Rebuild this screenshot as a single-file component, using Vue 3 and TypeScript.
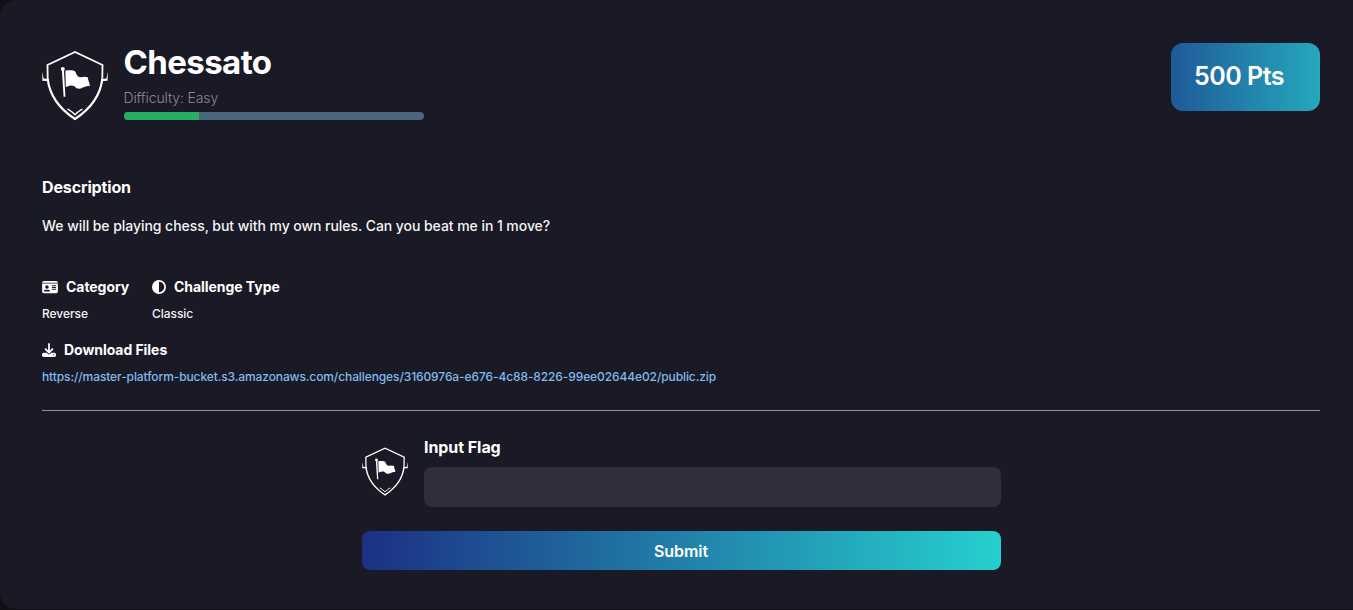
<script setup lang="ts">
import { ref } from 'vue'

interface Challenge {
  title: string
  difficulty: string
  progress: number
  points: number
  description: string
  category: string
  type: string
  file: string
}

const challenge: Challenge = {
  title: 'Chessato',
  difficulty: 'Easy',
  progress: 25,
  points: 500,
  description: 'We will be playing chess, but with my own rules. Can you beat me in 1 move?',
  category: 'Reverse',
  type: 'Classic',
  file: 'https://master-platform-bucket.s3.amazonaws.com/challenges/3160976a-e676-4c88-8226-99ee02644e02/public.zip',
}

const flag = ref('')
</script>

<template>
  <main class="card">
    <svg class="defs" width="0" height="0" aria-hidden="true">
      <symbol id="shield" viewBox="0 0 66 71">
        <g fill="none" stroke="#fff">
          <path stroke-width="1.800" d="M5.700 30 L5.500 15 L33 2 L60.500 15 L60.300 30" />
          <path stroke-width="2.100" d="M5.700 29 C7.500 44 17 58.500 33 69 C49 58.500 58.500 44 60.300 29" />
          <path stroke-width="1.400" d="M25.500 59.300 C28 59.800 28.500 61.300 30.300 62.200 L33 64.700 L35.700 62.200 C37.500 61.300 38 59.800 40.500 59.300" />
        </g>
        <g fill="#fff">
          <path d="M.2 21.500 L1.600 28.600 L6 29 L6.500 33 L5 30.900 L.4 30.700 Z" />
          <path d="M65.800 21.500 L64.400 28.600 L60 29 L59.500 33 L61 30.900 L65.600 30.700 Z" />
          <circle cx="20.800" cy="18.900" r="2" />
          <path d="M19.800 19 H21.900 L23.400 46.700 H21.600 Z" />
          <path d="M23.400 20.400 C27 20.600 31 19.500 33.200 21.600 C34.600 24 34.600 26.300 37 27 C40 27.800 42.800 25.600 46 27.600 C45.800 31 48.400 33.600 47.700 36.300 C43 35.300 41 38.900 37 38.800 C33 38.600 33.400 35 28.500 35.600 L23.800 37 Z" />
        </g>
      </symbol>
    </svg>

    <header class="head">
      <svg class="shield"><use href="#shield" /></svg>
      <div class="heading">
        <h1>{{ challenge.title }}</h1>
        <p class="difficulty">Difficulty: {{ challenge.difficulty }}</p>
        <div class="track"><div class="fill" :style="{ width: challenge.progress + '%' }"></div></div>
      </div>
      <div class="points">{{ challenge.points }} Pts</div>
    </header>

    <h2 class="desc-title">Description</h2>
    <p class="desc">{{ challenge.description }}</p>

    <div class="meta">
      <section class="category">
        <h3>
          <svg width="16" height="14" viewBox="0 0 576 512" fill="#fff"><path d="M0 96l576 0c0-35.300-28.700-64-64-64L64 32C28.700 32 0 60.700 0 96zm0 32L0 416c0 35.300 28.700 64 64 64l448 0c35.300 0 64-28.700 64-64l0-288L0 128zM64 405.300c0-29.500 23.900-53.300 53.300-53.300l117.300 0c29.500 0 53.300 23.900 53.300 53.300c0 5.900-4.800 10.700-10.700 10.700L74.700 416c-5.900 0-10.700-4.800-10.700-10.700zM176 192a64 64 0 1 1 0 128 64 64 0 1 1 0-128zm176 16c0-8.800 7.200-16 16-16l128 0c8.800 0 16 7.200 16 16s-7.200 16-16 16l-128 0c-8.800 0-16-7.200-16-16zm0 64c0-8.800 7.200-16 16-16l128 0c8.800 0 16 7.200 16 16s-7.200 16-16 16l-128 0c-8.800 0-16-7.200-16-16zm0 64c0-8.800 7.200-16 16-16l128 0c8.800 0 16 7.200 16 16s-7.200 16-16 16l-128 0c-8.800 0-16-7.200-16-16z" /></svg>
          <span>Category</span>
        </h3>
        <p>{{ challenge.category }}</p>
      </section>
      <section>
        <h3>
          <svg width="14" height="14" viewBox="0 0 512 512" fill="#fff"><path d="M448 256c0-106-86-192-192-192l0 384c106 0 192-86 192-192zM0 256a256 256 0 1 1 512 0A256 256 0 1 1 0 256z" /></svg>
          <span>Challenge Type</span>
        </h3>
        <p>{{ challenge.type }}</p>
      </section>
    </div>

    <section class="files">
      <h3>
        <svg width="14" height="14" viewBox="0 0 512 512" fill="#fff"><path d="M288 32c0-17.700-14.300-32-32-32s-32 14.300-32 32l0 242.700-73.400-73.400c-12.500-12.500-32.800-12.500-45.300 0s-12.500 32.800 0 45.300l128 128c12.500 12.500 32.800 12.500 45.300 0l128-128c12.500-12.500 12.500-32.800 0-45.300s-32.800-12.500-45.300 0L288 274.700 288 32zM64 352c-35.300 0-64 28.700-64 64l0 32c0 35.300 28.700 64 64 64l384 0c35.300 0 64-28.700 64-64l0-32c0-35.300-28.700-64-64-64l-101.500 0-45.300 45.300c-25 25-65.500 25-90.500 0L165.500 352 64 352zm368 56a24 24 0 1 1 0 48 24 24 0 1 1 0-48z" /></svg>
        <span>Download Files</span>
      </h3>
      <a>{{ challenge.file }}</a>
    </section>

    <form class="form" @submit.prevent>
      <div class="row">
        <svg class="shield small"><use href="#shield" /></svg>
        <div class="field">
          <label for="flag">Input Flag</label>
          <input id="flag" v-model="flag" type="text" autocomplete="off" />
        </div>
      </div>
      <button type="submit">Submit</button>
    </form>
  </main>
</template>

<style>
body {
  margin: 0;
  background: #111114;
  overflow: hidden;
}
</style>

<style scoped>
.card {
  box-sizing: border-box;
  width: 1370px;
  height: 609px;
  padding: 43px 50px 0 42px;
  background: #1a1926;
  border-radius: 16px;
  font-family: Inter, "Liberation Sans", sans-serif;
  color: #fff;
}
.defs { display: block; }
h1, h2, h3, p { margin: 0; }
.head { display: flex; height: 80px; }
.shield { flex: none; width: 66px; height: 71px; margin: 7px 16px 0 0; }
.heading { width: 300px; }
h1 {
  margin-top: -1px;
  text-indent: -0.5px;
  font-size: 33px;
  line-height: 40px;
  font-weight: 700;
  letter-spacing: -0.6px;
}
.difficulty {
  margin-top: 7px;
  text-indent: -0.5px;
  font-size: 14px;
  line-height: 18px;
  font-weight: 300;
  letter-spacing: -0.13px;
  color: #8b8a92;
}
.track {
  height: 8px;
  margin-top: 5px;
  border-radius: 4px;
  background: #4b677e;
  overflow: hidden;
}
.fill { height: 100%; background: #28ae60; }
.points {
  box-sizing: border-box;
  width: 149px;
  height: 68px;
  margin-left: auto;
  padding-left: 23px;
  border-radius: 12px;
  background: linear-gradient(90deg, #1f5a99, #25a8bc);
  font-size: 25px;
  font-weight: 600;
  line-height: 67px;
  letter-spacing: -0.5px;
  white-space: nowrap;
}
.desc-title { margin-top: 54px; font-size: 16px; line-height: 20px; font-weight: 700; letter-spacing: -0.14px; }
.desc { margin-top: 19px; font-size: 14px; line-height: 20px; font-weight: 500; letter-spacing: -0.055px; color: #f3f3f4; }
.meta { display: flex; margin-top: 41px; gap: 24px; }
h3 {
  display: flex;
  align-items: center;
  gap: 8px;
  font-size: 14px;
  line-height: 20px;
  font-weight: 700;
  letter-spacing: -0.05px;
  white-space: nowrap;
}
h3 svg { flex: none; }
.category { width: 86px; }
.meta p { margin-top: 8px; font-size: 12px; line-height: 18px; font-weight: 500; letter-spacing: -0.04px; color: #f3f3f4; }
.files { margin-top: 17px; height: 70px; border-bottom: 1px solid #8f8f95; }
.files a { display: block; width: max-content; margin-top: 8px; font-size: 12px; line-height: 18px; font-weight: 500; letter-spacing: -0.103px; color: #82bbea; }
.form { width: 639px; margin: 25px auto 0; }
.row { display: flex; }
.small { width: 46px; height: 51px; margin: 10px 16px 0 0; }
.field { flex: 1; }
label { display: block; text-indent: 0.5px; font-size: 16px; line-height: 22px; font-weight: 700; letter-spacing: -0.06px; }
input {
  display: block;
  box-sizing: border-box;
  width: 100%;
  height: 40px;
  margin-top: 9px;
  padding: 0 12px;
  border: 0;
  border-radius: 8px;
  background: #2f2e3a;
  color: #fff;
  font: inherit;
}
button {
  display: block;
  width: 100%;
  height: 39px;
  margin-top: 24px;
  padding: 1px 0 0;
  border: 0;
  border-radius: 8px;
  background: linear-gradient(90deg, #1c3084, #26d0ce);
  color: #fff;
  font: 600 16px/38px Inter, "Liberation Sans", sans-serif;
  letter-spacing: -0.05px;
}
</style>
